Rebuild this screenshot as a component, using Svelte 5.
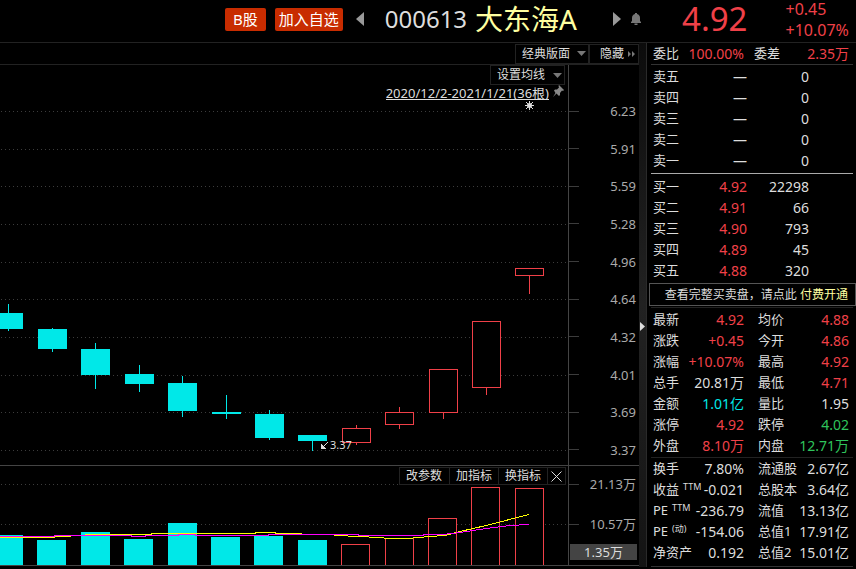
<script lang="ts">
  type Bar = { x: number; mid: number; top: number; bottom: number; high: number; low: number; up?: boolean };

  const candles: Bar[] = [
    { x: -6, mid: 8, top: 313, bottom: 329, high: 304, low: 331 },
    { x: 38, mid: 52, top: 329, bottom: 349, high: 328, low: 352 },
    { x: 81, mid: 95, top: 349, bottom: 375, high: 343, low: 389 },
    { x: 125, mid: 139, top: 374, bottom: 384, high: 365, low: 392 },
    { x: 168, mid: 182, top: 383, bottom: 411, high: 376, low: 417 },
    { x: 212, mid: 226, top: 412, bottom: 414, high: 395, low: 419 },
    { x: 255, mid: 269, top: 414, bottom: 438, high: 410, low: 440 },
    { x: 298, mid: 312, top: 435, bottom: 441, high: 435, low: 451 },
    { x: 342, mid: 356, top: 428, bottom: 443, high: 425, low: 445, up: true },
    { x: 385, mid: 399, top: 412, bottom: 425, high: 407, low: 429, up: true },
    { x: 429, mid: 443, top: 369, bottom: 413, high: 369, low: 419, up: true },
    { x: 472, mid: 486, top: 321, bottom: 388, high: 321, low: 395, up: true },
    { x: 515, mid: 529, top: 268, bottom: 276, high: 268, low: 294, up: true }
  ];

  const volumes = [
    { x: -6, top: 535 },
    { x: 37, top: 540 },
    { x: 81, top: 532 },
    { x: 124, top: 539 },
    { x: 168, top: 523 },
    { x: 211, top: 537 },
    { x: 254, top: 536 },
    { x: 298, top: 540 },
    { x: 341, top: 544, up: true },
    { x: 385, top: 538, up: true },
    { x: 428, top: 518, up: true },
    { x: 471, top: 487, up: true },
    { x: 515, top: 488, up: true }
  ];

  const priceGrid = [111, 149, 186, 224, 262, 299, 337, 375, 412, 450];
  const prices = ['6.23', '5.91', '5.59', '5.28', '4.96', '4.64', '4.32', '4.01', '3.69', '3.37'];

  const sells = ['卖五', '卖四', '卖三', '卖二', '卖一'];
  const buys = [
    ['买一', '4.92', '22298'],
    ['买二', '4.91', '66'],
    ['买三', '4.90', '793'],
    ['买四', '4.89', '45'],
    ['买五', '4.88', '320']
  ];

  const quotes = [
    ['最新', '4.92', 'red'],
    ['均价', '4.88', 'red'],
    ['涨跌', '+0.45', 'red'],
    ['今开', '4.86', 'red'],
    ['涨幅', '+10.07%', 'red'],
    ['最高', '4.92', 'red'],
    ['总手', '20.81万', ''],
    ['最低', '4.71', 'red'],
    ['金额', '1.01亿', 'cyan'],
    ['量比', '1.95', ''],
    ['涨停', '4.92', 'red'],
    ['跌停', '4.02', 'green'],
    ['外盘', '8.10万', 'red'],
    ['内盘', '12.71万', 'green']
  ];

  const finance = [
    ['换手', '', '7.80%'],
    ['流通股', '', '2.67亿'],
    ['收益', 'TTM', '-0.021'],
    ['总股本', '', '3.64亿'],
    ['PE', 'TTM', '-236.79'],
    ['流值', '', '13.13亿'],
    ['PE', '(动)', '-154.06'],
    ['总值1', '', '17.91亿'],
    ['净资产', '', '0.192'],
    ['总值2', '', '15.01亿']
  ];
</script>

<div class="terminal">
  <header>
    <div class="title">
      <button class="tag">B股</button>
      <button class="tag">加入自选</button>
      <button class="icon prev" aria-label="上一只">
        <svg width="8" height="14" viewBox="0 0 8 14"><path d="M8 0v14L0 7z" fill="#999" /></svg>
      </button>
      <span class="code">000613</span>
      <h1>大东海A</h1>
      <button class="icon next" aria-label="下一只">
        <svg width="8" height="14" viewBox="0 0 8 14"><path d="M0 0v14l8-7z" fill="#999" /></svg>
      </button>
      <button class="icon" aria-label="预警">
        <svg width="10" height="12" viewBox="0 0 10 12">
          <path d="M4 0h2v1c2 .4 3 2 3 4v3l1 1v1H0V9l1-1V5c0-2 1-3.600 3-4zM3.500 10.500h3V12h-3z" fill="#777" />
        </svg>
      </button>
    </div>
    <div class="last">
      <strong>4.92</strong>
      <div class="change"><span>+0.45</span><span>+10.07%</span></div>
    </div>
  </header>

  <main>
    <section class="chart">
      <nav class="toolbar">
        <button class="box layout">经典版面
          <svg width="9" height="5" viewBox="0 0 9 5"><path d="M0 0h9L4.500 5z" fill="#777" /></svg>
        </button>
        <button class="box hide">隐藏
          <svg width="8" height="6" viewBox="0 0 8 6"><path d="M0 0v6l3-3zM4 0v6l3-3z" fill="#777" /></svg>
        </button>
      </nav>

      <div class="pane price">
        <div class="plot">
          <svg viewBox="0 65 568 400" preserveAspectRatio="xMaxYMid meet" shape-rendering="crispEdges">
            {#each priceGrid as y}
              <line class="grid" x1="1" x2="568" y1={y + 0.5} y2={y + 0.5} />
            {/each}
            {#each candles as c}
              <g class:up={c.up} class="bar">
                {#if c.up}
                  <path class="wick" d="M{c.mid + 0.5} {c.high}V{c.top}M{c.mid + 0.5} {c.bottom}V{c.low}" />
                  <rect x={c.x + 0.5} y={c.top + 0.5} width="28" height={c.bottom - c.top - 1} />
                {:else}
                  <path class="wick" d="M{c.mid + 0.5} {c.high}V{c.low}" />
                  <rect x={c.x} y={c.top} width="29" height={c.bottom - c.top} />
                {/if}
              </g>
            {/each}
            <path d="M328 442l-5 5" class="arrow" />
            <path d="M321 444v5h5z" fill="#ddd" />
            <text x="330" y="449">3.37</text>
          </svg>
          <div class="tools">
            <button class="box average">设置均线
              <svg width="9" height="5" viewBox="0 0 9 5"><path d="M0 0h9L4.500 5z" fill="#777" /></svg>
            </button>
            <div class="range">
              <a href="#range">2020/12/2-2021/1/21(36根)</a>
              <svg width="12" height="12" viewBox="0 0 12 12">
                <path d="M6 0l5 5-1 1-1-.5L7 8v2L6 11 3.500 8.500 0 12l2.500-4L1 5.500 2 4.500h2L6 2.500 5.500 1z" fill="#888" />
              </svg>
            </div>
            <svg class="star" width="9" height="9" viewBox="0 0 9 9">
              <path d="M4.500 0v9M0 4.500h9M1 1l7 7M8 1L1 8" stroke="#ddd" />
              <circle cx="4.500" cy="4.500" r="2.500" fill="#ddd" />
            </svg>
          </div>
        </div>
        <div class="axis">
          {#each prices as p}
            <span class="tick">{p}</span>
          {/each}
        </div>
      </div>

      <div class="pane volume">
        <div class="plot">
          <svg viewBox="0 466 568 99" preserveAspectRatio="xMaxYMid meet" shape-rendering="crispEdges">
            <line class="grid" x1="1" x2="568" y1="484.500" y2="484.500" />
            <line class="grid" x1="1" x2="568" y1="524.500" y2="524.500" />
            {#each volumes as v}
              <g class:up={v.up} class="bar">
                {#if v.up}
                  <rect x={v.x + 0.5} y={v.top + 0.5} width="28" height="90" />
                {:else}
                  <rect x={v.x} y={v.top} width="29" height={565 - v.top} />
                {/if}
              </g>
            {/each}
            <polyline
              stroke="#ff0"
              points="0,537.500 54,537.500 54,536.500 70,536.500 70,535.500 85,535.500 85,534.500 151,534.500 151,533.500 255,533.500 255,532.500 275,532.500 275,533.500 301,533.500 301,534.500 334,534.500 334,535.500 362,536.500 376,537.500 391,538.500 407,538.500 430,536.500 445,535.500 460,531.500 486,525.500 529,514.500"
            />
            <polyline
              stroke="#f0f"
              points="0,536.500 54,536.500 54,535.500 131,535.500 131,536.500 145,536.500 145,535.500 178,535.500 178,534.500 195,534.500 195,535.500 268,535.500 268,534.500 358,534.500 358,535.500 423,535.500 423,534.500 443,534.500 460,532.500 486,528.500 510,525.500 529,524.500"
            />
          </svg>
          <div class="indicator">
            <button class="box">改参数</button>
            <button class="box">加指标</button>
            <button class="box">换指标</button>
            <button class="box close" aria-label="关闭">
              <svg width="11" height="11" viewBox="0 0 11 11"><path d="M.5.5l10 10M10.500.5l-10 10" stroke="#ddd" /></svg>
            </button>
          </div>
        </div>
        <div class="axis">
          <span class="tick">21.13万</span>
          <span class="tick">10.57万</span>
          <span class="current">1.35万</span>
        </div>
      </div>
    </section>

    <div class="splitter">
      <svg width="6" height="9" viewBox="0 0 6 9"><path d="M1 0l5 4.500L1 9z" fill="#ddd" /></svg>
    </div>

    <aside>
      <dl class="ratio">
        <div><dt>委比</dt><dd class="red">100.00%</dd></div>
        <div><dt>委差</dt><dd class="red">2.35万</dd></div>
      </dl>

      <table>
        <colgroup><col class="name" /><col class="cost" /><col class="count" /></colgroup>
        <tbody>
          {#each sells as name}
            <tr><th scope="row">{name}</th><td>—</td><td>0</td></tr>
          {/each}
        </tbody>
      </table>
      <table class="buy">
        <colgroup><col class="name" /><col class="cost" /><col class="count" /></colgroup>
        <tbody>
          {#each buys as [name, price, count]}
            <tr><th scope="row">{name}</th><td class="red">{price}</td><td>{count}</td></tr>
          {/each}
        </tbody>
      </table>

      <a class="promo" href="#open">查看完整买卖盘，请点此 <em>付费开通</em></a>

      <dl class="stats">
        {#each quotes as [label, value, tone]}
          <div><dt>{label}</dt><dd class={tone}>{value}</dd></div>
        {/each}
      </dl>
      <dl class="finance">
        {#each finance as [label, note, value]}
          <div><dt>{label}{#if note}<sup>{note}</sup>{/if}</dt><dd>{value}</dd></div>
        {/each}
      </dl>
    </aside>
  </main>
</div>

<style>
  :global(body) {
    background: #000;
  }

  .terminal {
    font-family: 'Noto Sans', 'Noto Sans CJK SC', sans-serif;
    font-size: 13px;
    color: #ddd;
    background: #000;
  }

  button {
    font: inherit;
    color: inherit;
    background: none;
    border: 0;
    padding: 0;
    white-space: nowrap;
  }

  a {
    color: inherit;
    text-decoration: none;
  }

  svg {
    display: block;
    flex: none;
  }

  header {
    display: flex;
    height: 42px;
    border-bottom: 1px solid #222;
  }

  .title {
    flex: 1;
    display: flex;
    align-items: center;
    justify-content: flex-end;
    padding: 0 5px 4px 0;
  }

  .tag {
    height: 23px;
    padding: 0 4px;
    margin-right: 9px;
    border-radius: 2px;
    background: #c82c00;
    color: #fff;
    font-size: 15px;
    line-height: 23px;
  }

  .tag:first-child {
    padding: 0 8px;
  }

  .prev {
    margin: 0 21px 0 4px;
  }

  .next {
    margin: 0 10px 0 36px;
  }

  .code {
    font-size: 24px;
    line-height: 38px;
  }

  h1 {
    margin: 0 0 0 8px;
    font-size: 28px;
    font-weight: 400;
    line-height: 38px;
    color: #ffffa0;
  }

  .last {
    flex: none;
    width: 174px;
    padding-left: 36px;
    display: flex;
    align-items: center;
    gap: 38px;
    color: #f04048;
  }

  .last strong {
    padding-bottom: 4px;
    font-size: 33px;
    font-weight: 400;
    line-height: 38px;
  }

  .change {
    display: flex;
    flex-direction: column;
    padding-bottom: 2px;
    font-size: 16px;
    line-height: 21px;
  }

  main {
    display: flex;
  }

  .chart {
    flex: 1;
    min-width: 0;
  }

  .box {
    display: flex;
    align-items: center;
    border: 1px solid #222;
    background: #000;
    font-size: 12px;
    line-height: 16px;
  }

  .toolbar {
    display: flex;
    justify-content: flex-end;
    align-items: center;
    height: 21px;
    border-bottom: 1px solid #222;
  }

  .toolbar .box {
    height: 20px;
  }

  .layout {
    gap: 7px;
    padding: 0 2px 0 6px;
  }

  .hide {
    gap: 4px;
    padding: 0 2px 0 10px;
  }

  .pane {
    display: flex;
  }

  .plot {
    position: relative;
    flex: 1;
    min-width: 0;
    border-right: 1px solid #444;
  }

  .plot > svg {
    width: 100%;
  }

  .price .plot > svg {
    height: 400px;
  }

  .volume {
    border-top: 1px solid #444;
    border-bottom: 1px solid #444;
  }

  .volume .plot > svg {
    height: 99px;
  }

  .grid {
    stroke: #3c3c3c;
    stroke-dasharray: 1 3;
  }

  .bar rect {
    fill: #00e8e8;
  }

  .wick {
    stroke: #00e8e8;
    fill: none;
  }

  .up rect {
    fill: #000;
    stroke: #f04048;
  }

  .up .wick {
    stroke: #f04048;
  }

  .arrow {
    fill: none;
    stroke: #ddd;
    shape-rendering: auto;
  }

  .plot text {
    fill: #ddd;
    font-size: 11px;
  }

  polyline {
    fill: none;
  }

  .tools {
    position: absolute;
    top: 0;
    right: 3px;
    display: flex;
    flex-direction: column;
    align-items: flex-end;
  }

  .average {
    gap: 8px;
    height: 20px;
    padding: 0 2px 0 6px;
  }

  .range {
    display: flex;
    gap: 4px;
    line-height: 17px;
  }

  .range a {
    height: 14px;
    border-bottom: 1px solid #ddd;
  }

  .tools .star {
    width: 9px;
    margin: 1px 31px 0 0;
  }

  .indicator {
    position: absolute;
    top: 1px;
    right: 2px;
    display: flex;
  }

  .indicator .box {
    height: 18px;
    padding: 0 6px;
    margin-left: -1px;
  }

  .indicator .box:first-child {
    padding-right: 7px;
  }

  .indicator .close {
    padding: 0 3px;
  }

  .axis {
    flex: none;
    width: 70px;
    display: flex;
    flex-direction: column;
    color: #aaa;
    line-height: 16px;
  }

  .price .axis {
    justify-content: space-between;
    padding: 38px 0 7px;
  }

  .tick {
    display: flex;
    align-items: center;
    justify-content: space-between;
    padding-right: 3px;
  }

  .tick::before {
    content: '';
    width: 10px;
    height: 1px;
    background: #3c3c3c;
  }

  .volume .axis {
    padding-top: 10px;
  }

  .volume .tick {
    margin-bottom: 24px;
  }

  .volume .tick + .tick {
    margin-bottom: 12px;
  }

  .current {
    margin: 0 2px 0 1px;
    background: #444;
    color: #ddd;
    text-align: center;
  }

  .splitter {
    flex: none;
    width: 7px;
    display: flex;
    align-items: center;
    padding-top: 42px;
    border-right: 1px solid #2a2a2a;
    background: linear-gradient(#0c0c0c, #222 50%, #141414);
  }

  aside {
    flex: none;
    width: 209px;
  }

  dl {
    margin: 0 3px 0 4px;
    padding: 0 4px 0 2px;
    display: grid;
    grid-template-columns: 91px 91px;
    justify-content: space-between;
    border-bottom: 1px solid #333;
  }

  dl div {
    display: flex;
    justify-content: space-between;
    height: 21px;
    line-height: 21px;
    white-space: nowrap;
  }

  .ratio {
    grid-template-columns: 91px 95px;
  }

  dd {
    margin: 0;
    font-size: 14px;
  }

  .stats {
    padding-top: 1px;
    padding-bottom: 1px;
    border-top: 1px solid #222;
    border-bottom-color: #222;
  }

  .finance {
    padding-bottom: 3px;
  }

  sup {
    margin-left: 4px;
    font-size: 9px;
    line-height: 0;
    vertical-align: 4px;
  }

  table {
    width: 202px;
    margin: 0 3px 0 4px;
    padding: 1px 0 2px;
    border-bottom: 1px solid #aaa;
    border-spacing: 0;
    table-layout: fixed;
  }

  .name {
    width: 36px;
  }

  .cost {
    width: 60px;
  }

  .count {
    width: 106px;
  }

  th,
  td {
    height: 21px;
    padding: 0;
    line-height: 21px;
    text-align: right;
  }

  th {
    padding-left: 2px;
    font-weight: 400;
    text-align: left;
  }

  td {
    font-size: 14px;
  }

  td:last-child {
    padding-right: 44px;
  }

  .buy {
    padding: 2px 0;
    border-bottom: 0;
  }

  .promo {
    display: block;
    height: 21px;
    margin: 0 0 1px 2px;
    padding-right: 7px;
    border: 1px solid #555;
    font-size: 12px;
    line-height: 21px;
    text-align: right;
  }

  em {
    font-style: normal;
    color: #ffffa0;
  }

  .red {
    color: #f04048;
  }

  .cyan {
    color: #00e8e8;
  }

  .green {
    color: #2fc45c;
  }
</style>
